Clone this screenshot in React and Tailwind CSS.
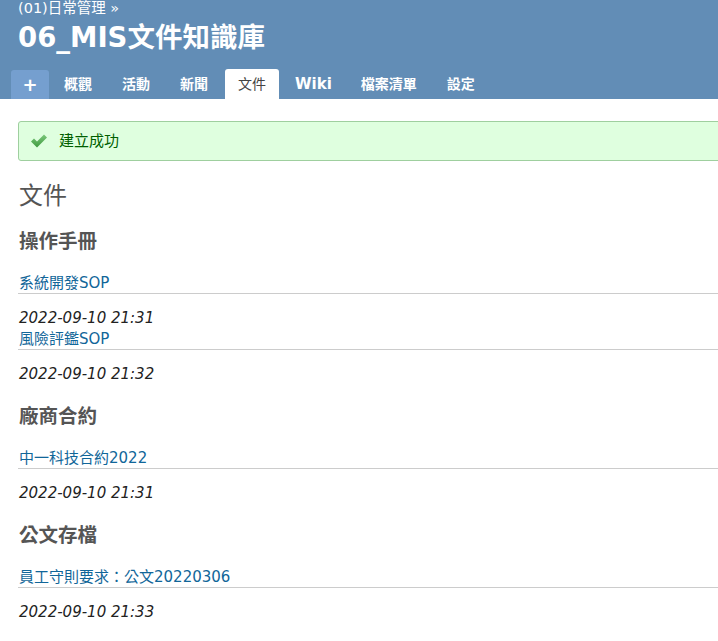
import React from 'react';

const cjk = '"DejaVu Sans", "Noto Sans CJK TC", sans-serif';

const tabs = [
  { label: '概觀' },
  { label: '活動' },
  { label: '新聞' },
  { label: '文件', selected: true },
  { label: 'Wiki', latin: true },
  { label: '檔案清單' },
  { label: '設定' },
];

const sections = [
  {
    title: '操作手冊',
    docs: [
      { name: '系統開發SOP', date: '2022-09-10 21:31' },
      { name: '風險評鑑SOP', date: '2022-09-10 21:32' },
    ],
  },
  {
    title: '廠商合約',
    docs: [{ name: '中一科技合約2022', date: '2022-09-10 21:31' }],
  },
  {
    title: '公文存檔',
    docs: [{ name: '員工守則要求：公文20220306', date: '2022-09-10 21:33' }],
  },
];

const CheckIcon = () => (
  <svg width="18" height="16" viewBox="0 0 18 16">
    <defs>
      <linearGradient id="chk" x1="0" y1="0" x2="0" y2="1">
        <stop offset="0%" stopColor="#7bc87b" />
        <stop offset="100%" stopColor="#3f9a3f" />
      </linearGradient>
    </defs>
    <path d="M1 8.5 L4 5.5 L7 8.5 L14 1.5 L17 4.5 L7 14.5 Z" fill="url(#chk)" />
  </svg>
);

export default function App() {
  return (
    <div className="w-[718px] h-[641px] overflow-hidden bg-white" style={{ fontFamily: cjk }}>
      {/* header */}
      <div className="bg-[#628db6] h-[99px] flex flex-col">
        <div className="pl-[18px] h-[16px] text-[14.5px] leading-[16px] text-white">(01)日常管理 »</div>
        <h1 className="pl-[18px] mt-[5px] text-[27.5px] leading-[32px] font-bold text-white">06_MIS文件知識庫</h1>
        <div className="mt-auto flex items-end pl-[11px] gap-[4px]">
          <div className="w-[38px] h-[29px] -mr-[2px] rounded-t-[3px] bg-[#759fcf] text-white text-[18px] font-bold flex items-center justify-center">+</div>
          {tabs.map((t) => (
            <div
              key={t.label}
              className={
                t.selected
                  ? 'h-[30px] px-[13px] rounded-t-[3px] bg-white text-[#444] text-[14px] flex items-center'
                  : t.latin
                  ? 'h-[30px] px-[12px] text-white font-bold text-[15px] flex items-center'
                  : 'h-[30px] px-[13px] text-white font-bold text-[14px] flex items-center'
              }
            >
              {t.label}
            </div>
          ))}
        </div>
      </div>

      {/* content */}
      <div className="pl-[18px]">
        <div className="mt-[22px] -mr-4 h-[40px] border border-[#9fcf9f] rounded-[3px] bg-[#dfffdf] flex items-center pl-[11px] gap-[11px]">
          <CheckIcon />
          <span className="text-[15px] text-[#005f00]">建立成功</span>
        </div>

        <h2 className="mt-[20px] text-[24px] leading-[30px] text-[#555] pl-[1px]">文件</h2>

        {sections.map((s, i) => (
          <div key={s.title} className={i === 0 ? 'mt-[19px]' : 'mt-[20px]'}>
            <h3 className="text-[19.5px] leading-[24px] font-bold text-[#555] pl-[1px]">{s.title}</h3>
            <div className="mt-[19px]">
              {s.docs.map((d) => (
                <div key={d.name}>
                  <div className="leading-[20px] border-b border-[#ccc] text-[15px] text-[#116699] pl-[1px]">{d.name}</div>
                  <div className="mt-[14px] leading-[21px] text-[15px] italic text-[#222] pl-[1px]">{d.date}</div>
                </div>
              ))}
            </div>
          </div>
        ))}
      </div>
    </div>
  );
}
